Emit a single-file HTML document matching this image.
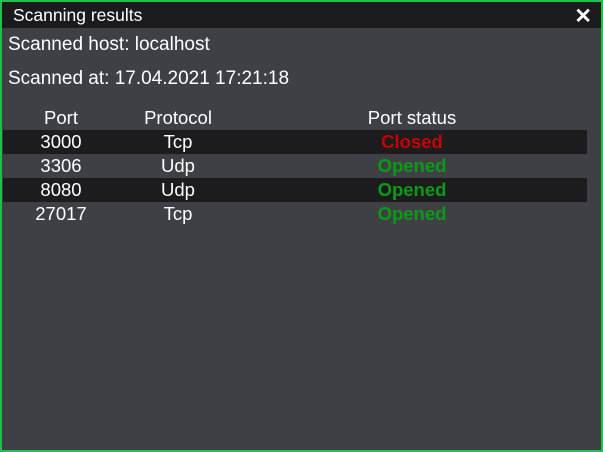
<!DOCTYPE html><html><head><style>
body{margin:0;width:603px;height:452px;overflow:hidden;font-family:"Liberation Sans",sans-serif;}
.w{position:absolute;left:0;top:0;width:599px;height:448px;border:2px solid #1ec24a;background:#3f4046;}
.t{position:absolute;left:0;top:0;width:599px;height:26px;background:#1b1b1d;color:#fff;font-size:17.5px;}
.t span{position:absolute;left:11px;top:3px}
.x{position:absolute;right:9px;top:2px;font-size:21px;font-weight:bold}
.l{position:absolute;left:6px;color:#fff;font-size:19px}
.r{position:absolute;left:1px;width:584px;height:24px;color:#fff;font-size:18.5px}
.r div{position:absolute;top:1px;text-align:center}
.a{left:-2px;width:120px}.b{left:115px;width:120px}.c{left:329px;width:160px}
.d{background:#1c1c1e}
.cl{color:#c80000;font-weight:bold}.op{color:#0a9a14;font-weight:bold}
</style></head><body><div class="w">
<div class="t"><span>Scanning results</span><div class="x">✕</div></div>
<div class="l" style="top:32px">Scanned host: localhost</div>
<div class="l" style="top:66px">Scanned at: 17.04.2021 17:21:18</div>
<div class="r" style="top:104px"><div class="a">Port</div><div class="b">Protocol</div><div class="c">Port status</div></div>
<div class="r d" style="top:128px"><div class="a">3000</div><div class="b">Tcp</div><div class="c cl">Closed</div></div>
<div class="r" style="top:152px"><div class="a">3306</div><div class="b">Udp</div><div class="c op">Opened</div></div>
<div class="r d" style="top:176px"><div class="a">8080</div><div class="b">Udp</div><div class="c op">Opened</div></div>
<div class="r" style="top:200px"><div class="a">27017</div><div class="b">Tcp</div><div class="c op">Opened</div></div>
</div></body></html>
